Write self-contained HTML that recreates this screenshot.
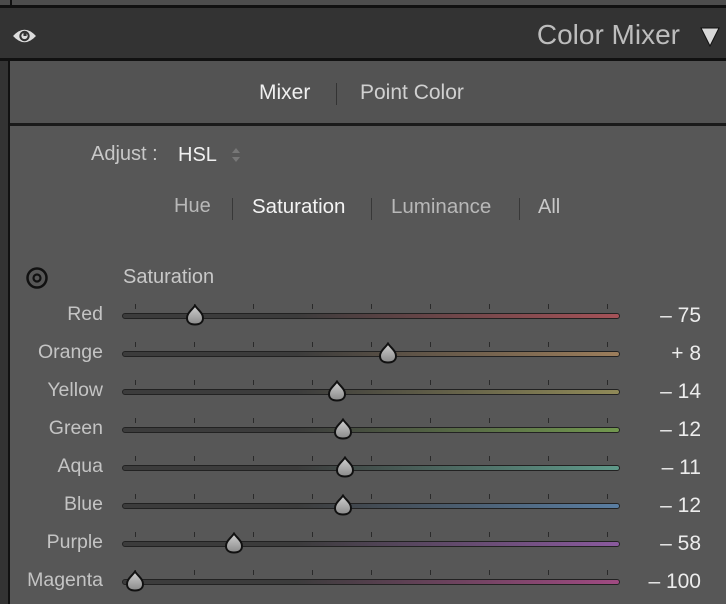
<!DOCTYPE html>
<html><head><style>
body{margin:0;width:726px;height:604px;overflow:hidden;background:#333;font-family:"Liberation Sans",sans-serif;position:relative}
.a{position:absolute}
.lbl{position:absolute;right:623px;font-size:19.5px;color:#c4c4c4;text-align:right}
.num{position:absolute;right:25px;font-size:21px;color:#ececec;text-align:right}
.trk{position:absolute;left:122px;width:498px;height:6px;border-radius:3px;border:1px solid #222;box-sizing:border-box}
.tick{position:absolute;width:1px;height:5px;background:#2a2a2a}
.th{position:absolute;width:20px;height:22px}
</style></head><body>
<div class="a" style="left:0;top:0;width:726px;height:5px;background:#4b4b4b"></div>
<div class="a" style="left:0;top:5px;width:726px;height:3px;background:#111"></div>
<div class="a" style="left:10px;top:0;width:716px;height:5px;background:#4d4d4d;border-left:2px solid #111"></div>
<svg class="a" style="left:12px;top:25px" width="25" height="22" viewBox="0 0 24 20"><path d="M1 10 Q12 -2 23 10 Q12 22 1 10Z" fill="#ddd"/><circle cx="12" cy="10" r="5" fill="#333"/><circle cx="12" cy="10" r="3" fill="#ddd"/><rect x="11" y="7" width="3" height="3" fill="#333"/></svg>
<div class="a" style="right:46px;top:19px;font-size:28px;color:#bdbdbd">Color Mixer</div>
<svg class="a" style="left:700px;top:27px" width="20" height="20"><path d="M1 1H19L10 19Z" fill="#d8d8d8" stroke="#111" stroke-width="1"/></svg>
<div class="a" style="left:0;top:58px;width:726px;height:3px;background:#111"></div>
<div class="a" style="left:8px;top:61px;width:718px;height:543px;background:#575757;border-left:2px solid #111"></div>
<div class="a" style="left:10px;top:61px;width:716px;height:62px;background:#535353"></div>
<div class="a" style="left:10px;top:123px;width:716px;height:3px;background:#1a1a1a"></div>
<div class="a" style="left:259px;top:81px;font-size:21px;color:#f0f0f0">Mixer</div>
<div class="a" style="left:336px;top:83px;width:1px;height:22px;background:#333"></div>
<div class="a" style="left:360px;top:81px;font-size:21px;color:#d0d0d0">Point Color</div>
<div class="a" style="left:91px;top:143px;font-size:20px;color:#c8c8c8">Adjust :</div>
<div class="a" style="left:178px;top:144px;font-size:20px;color:#f0f0f0">HSL</div>
<svg class="a" style="left:230px;top:147px" width="12" height="16"><path d="M6 1L10 6H2Z M6 15L10 10H2Z" fill="#777"/></svg>
<div class="a" style="left:174px;top:195px;font-size:20px;color:#b8b8b8">Hue</div>
<div class="a" style="left:232px;top:198px;width:1px;height:22px;background:#383838"></div>
<div class="a" style="left:252px;top:195px;font-size:20.5px;color:#f4f4f4">Saturation</div>
<div class="a" style="left:371px;top:198px;width:1px;height:22px;background:#383838"></div>
<div class="a" style="left:391px;top:195px;font-size:20.5px;color:#b8b8b8">Luminance</div>
<div class="a" style="left:519px;top:198px;width:1px;height:22px;background:#383838"></div>
<div class="a" style="left:538px;top:196px;font-size:20px;color:#c8c8c8">All</div>
<svg class="a" style="left:25px;top:266px" width="24" height="24"><circle cx="12" cy="12" r="9.5" fill="none" stroke="#111" stroke-width="2.5"/><circle cx="12" cy="12" r="3.5" fill="none" stroke="#111" stroke-width="2.2"/></svg>
<div class="a" style="left:123px;top:266px;font-size:20px;color:#c8c8c8">Saturation</div>
<div id="rows"></div>
<script>
var rows=[["Red","– 75",195,"#a55258"],["Orange","+ 8",388,"#9c7e5c"],["Yellow","– 14",337,"#908a58"],["Green","– 12",343,"#72984f"],["Aqua","– 11",345,"#5f9a8a"],["Blue","– 12",343,"#5a7ea2"],["Purple","– 58",234,"#8a5a9e"],["Magenta","– 100",135,"#a04a82"]];
var h="";
rows.forEach(function(r,i){var y=316+i*38;
h+='<div class="lbl" style="top:'+(y-13)+'px">'+r[0]+'</div>';
h+='<div class="num" style="top:'+(y-12)+'px">'+r[1]+'</div>';
for(var k=0;k<9;k++)h+='<div class="tick" style="left:'+(135+k*59)+'px;top:'+(y-12)+'px"></div>';
h+='<div class="trk" style="top:'+(y-3)+'px;background:linear-gradient(90deg,#3c3c3c 0%,#3c3c3c 35%,'+r[3]+' 100%)"></div>';
h+='<svg class="th" style="left:'+(r[2]-10)+'px;top:'+(y-12)+'px" viewBox="0 0 20 22"><defs><linearGradient id="g'+i+'" x1="0" y1="0" x2="0" y2="1"><stop offset="0" stop-color="#d0d0d0"/><stop offset="1" stop-color="#8a8a8a"/></linearGradient></defs><path d="M10 1.5 C13 6 18 9 18 14 C18 18.5 14.5 20.5 10 20.5 C5.5 20.5 2 18.5 2 14 C2 9 7 6 10 1.5Z" fill="url(#g'+i+')" stroke="#111" stroke-width="2"/></svg>';
});
document.getElementById("rows").innerHTML=h;
</script>
</body></html>
